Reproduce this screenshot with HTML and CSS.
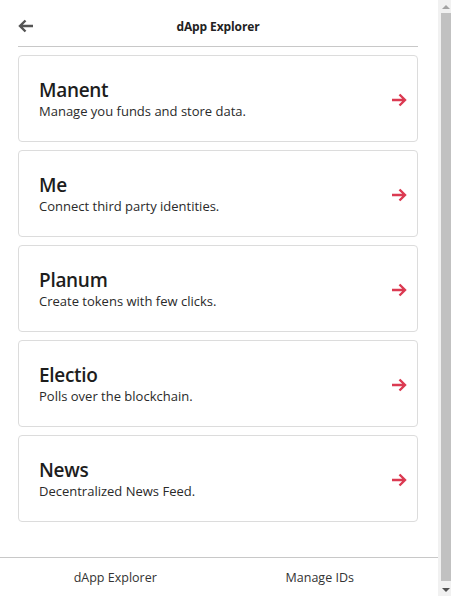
FILE: index.html
```html
<!DOCTYPE html>
<html>
<head>
<meta charset="utf-8">
<title>dApp Explorer</title>
<link rel="stylesheet" href="styles.css">
</head>
<body>
<div class="app">
  <header class="header">
    <button class="back" aria-label="Back">
      <svg width="16" height="14" viewBox="0 0 16 14"><path d="M15 7H2M7.5 1.5L2 7l5.5 5.5" fill="none" stroke="#555" stroke-width="2.4"/></svg>
    </button>
    <h1 class="title">dApp Explorer</h1>
  </header>
  <main class="list">
    <a class="card" href="#">
      <div class="card-text"><h2 class="card-title">Manent</h2><p class="card-desc">Manage you funds and store data.</p></div>
      <svg class="go" width="16" height="14" viewBox="0 0 16 14"><path d="M1 7h13M8.5 1.5L14 7l-5.5 5.5" fill="none" stroke="#db3a52" stroke-width="2.4"/></svg>
    </a>
    <a class="card" href="#">
      <div class="card-text"><h2 class="card-title">Me</h2><p class="card-desc">Connect third party identities.</p></div>
      <svg class="go" width="16" height="14" viewBox="0 0 16 14"><path d="M1 7h13M8.5 1.5L14 7l-5.5 5.5" fill="none" stroke="#db3a52" stroke-width="2.4"/></svg>
    </a>
    <a class="card" href="#">
      <div class="card-text"><h2 class="card-title">Planum</h2><p class="card-desc">Create tokens with few clicks.</p></div>
      <svg class="go" width="16" height="14" viewBox="0 0 16 14"><path d="M1 7h13M8.5 1.5L14 7l-5.5 5.5" fill="none" stroke="#db3a52" stroke-width="2.4"/></svg>
    </a>
    <a class="card" href="#">
      <div class="card-text"><h2 class="card-title">Electio</h2><p class="card-desc">Polls over the blockchain.</p></div>
      <svg class="go" width="16" height="14" viewBox="0 0 16 14"><path d="M1 7h13M8.5 1.5L14 7l-5.5 5.5" fill="none" stroke="#db3a52" stroke-width="2.4"/></svg>
    </a>
    <a class="card" href="#">
      <div class="card-text"><h2 class="card-title">News</h2><p class="card-desc">Decentralized News Feed.</p></div>
      <svg class="go" width="16" height="14" viewBox="0 0 16 14"><path d="M1 7h13M8.5 1.5L14 7l-5.5 5.5" fill="none" stroke="#db3a52" stroke-width="2.4"/></svg>
    </a>
  </main>
  <footer class="footer">
    <a class="tab" href="#">dApp Explorer</a>
    <a class="tab" href="#">Manage IDs</a>
  </footer>
</div>
<div class="scrollbar" aria-hidden="true">
  <div class="sb-btn"><span class="tri-up"></span></div>
  <div class="sb-track"><div class="sb-thumb"></div></div>
  <div class="sb-btn"><span class="tri-down"></span></div>
</div>
</body>
</html>
```
FILE: styles.css
```css
html, body {
  margin: 0;
  padding: 0;
  background: #fff;
  overflow: hidden;
}
body {
  font-family: "Open Sans", "Noto Sans", sans-serif;
  color: #222;
  display: flex;
  height: 100vh;
}
.app {
  flex: 1;
  min-width: 0;
  display: flex;
  flex-direction: column;
}
.header {
  margin: 0 20px 0 18px;
  height: 40px;
  padding-top: 6px;
  border-bottom: 1px solid #c8c8c8;
  display: flex;
  align-items: center;
  justify-content: center;
  position: relative;
}
.back {
  position: absolute;
  left: 0;
  top: 19px;
  padding: 0;
  border: 0;
  background: none;
  display: flex;
}
.title {
  margin: 0;
  font-size: 12px;
  font-weight: 700;
  color: #222;
  letter-spacing: -0.1px;
}
.list {
  flex: 1;
  padding: 8px 20px 0 18px;
  display: flex;
  flex-direction: column;
  gap: 8px;
}
.card {
  height: 87px;
  box-sizing: border-box;
  border: 1px solid #dcdcdc;
  border-radius: 4px;
  display: flex;
  align-items: center;
  justify-content: space-between;
  padding: 0 10px 0 20px;
  text-decoration: none;
  color: inherit;
}
.card-title {
  margin: 0;
  font-size: 19px;
  font-weight: 600;
  line-height: 24px;
  color: #1d1d1d;
  letter-spacing: -0.3px;
}
.card-desc {
  margin: 0;
  font-size: 13px;
  line-height: 18px;
  color: #2a2a2a;
}
.go {
  flex: none;
  margin-top: 2px;
}
.footer {
  height: 38px;
  border-top: 1px solid #c8c8c8;
  display: grid;
  grid-template-columns: 1fr 1fr;
  align-items: center;
  padding: 0 16px 0 13px;
}
.tab {
  text-align: center;
  font-size: 12.5px;
  color: #333;
  text-decoration: none;
}
.scrollbar {
  flex: none;
  width: 13px;
  height: 100vh;
  background: #f1f1f1;
  display: flex;
  flex-direction: column;
}
.sb-btn {
  height: 13px;
  display: flex;
  align-items: center;
  justify-content: center;
  flex: none;
}
.sb-track {
  flex: 1;
  display: flex;
  padding: 0 0 2px 3px;
}
.sb-thumb {
  flex: 1;
  background: #c1c1c1;
}
.tri-up {
  width: 0;
  height: 0;
  border-left: 4px solid transparent;
  border-right: 4px solid transparent;
  border-bottom: 4px solid #a3a3a3;
  margin-left: 3px;
}
.tri-down {
  width: 0;
  height: 0;
  border-left: 4px solid transparent;
  border-right: 4px solid transparent;
  border-top: 4px solid #505050;
  margin-left: 3px;
}
```
